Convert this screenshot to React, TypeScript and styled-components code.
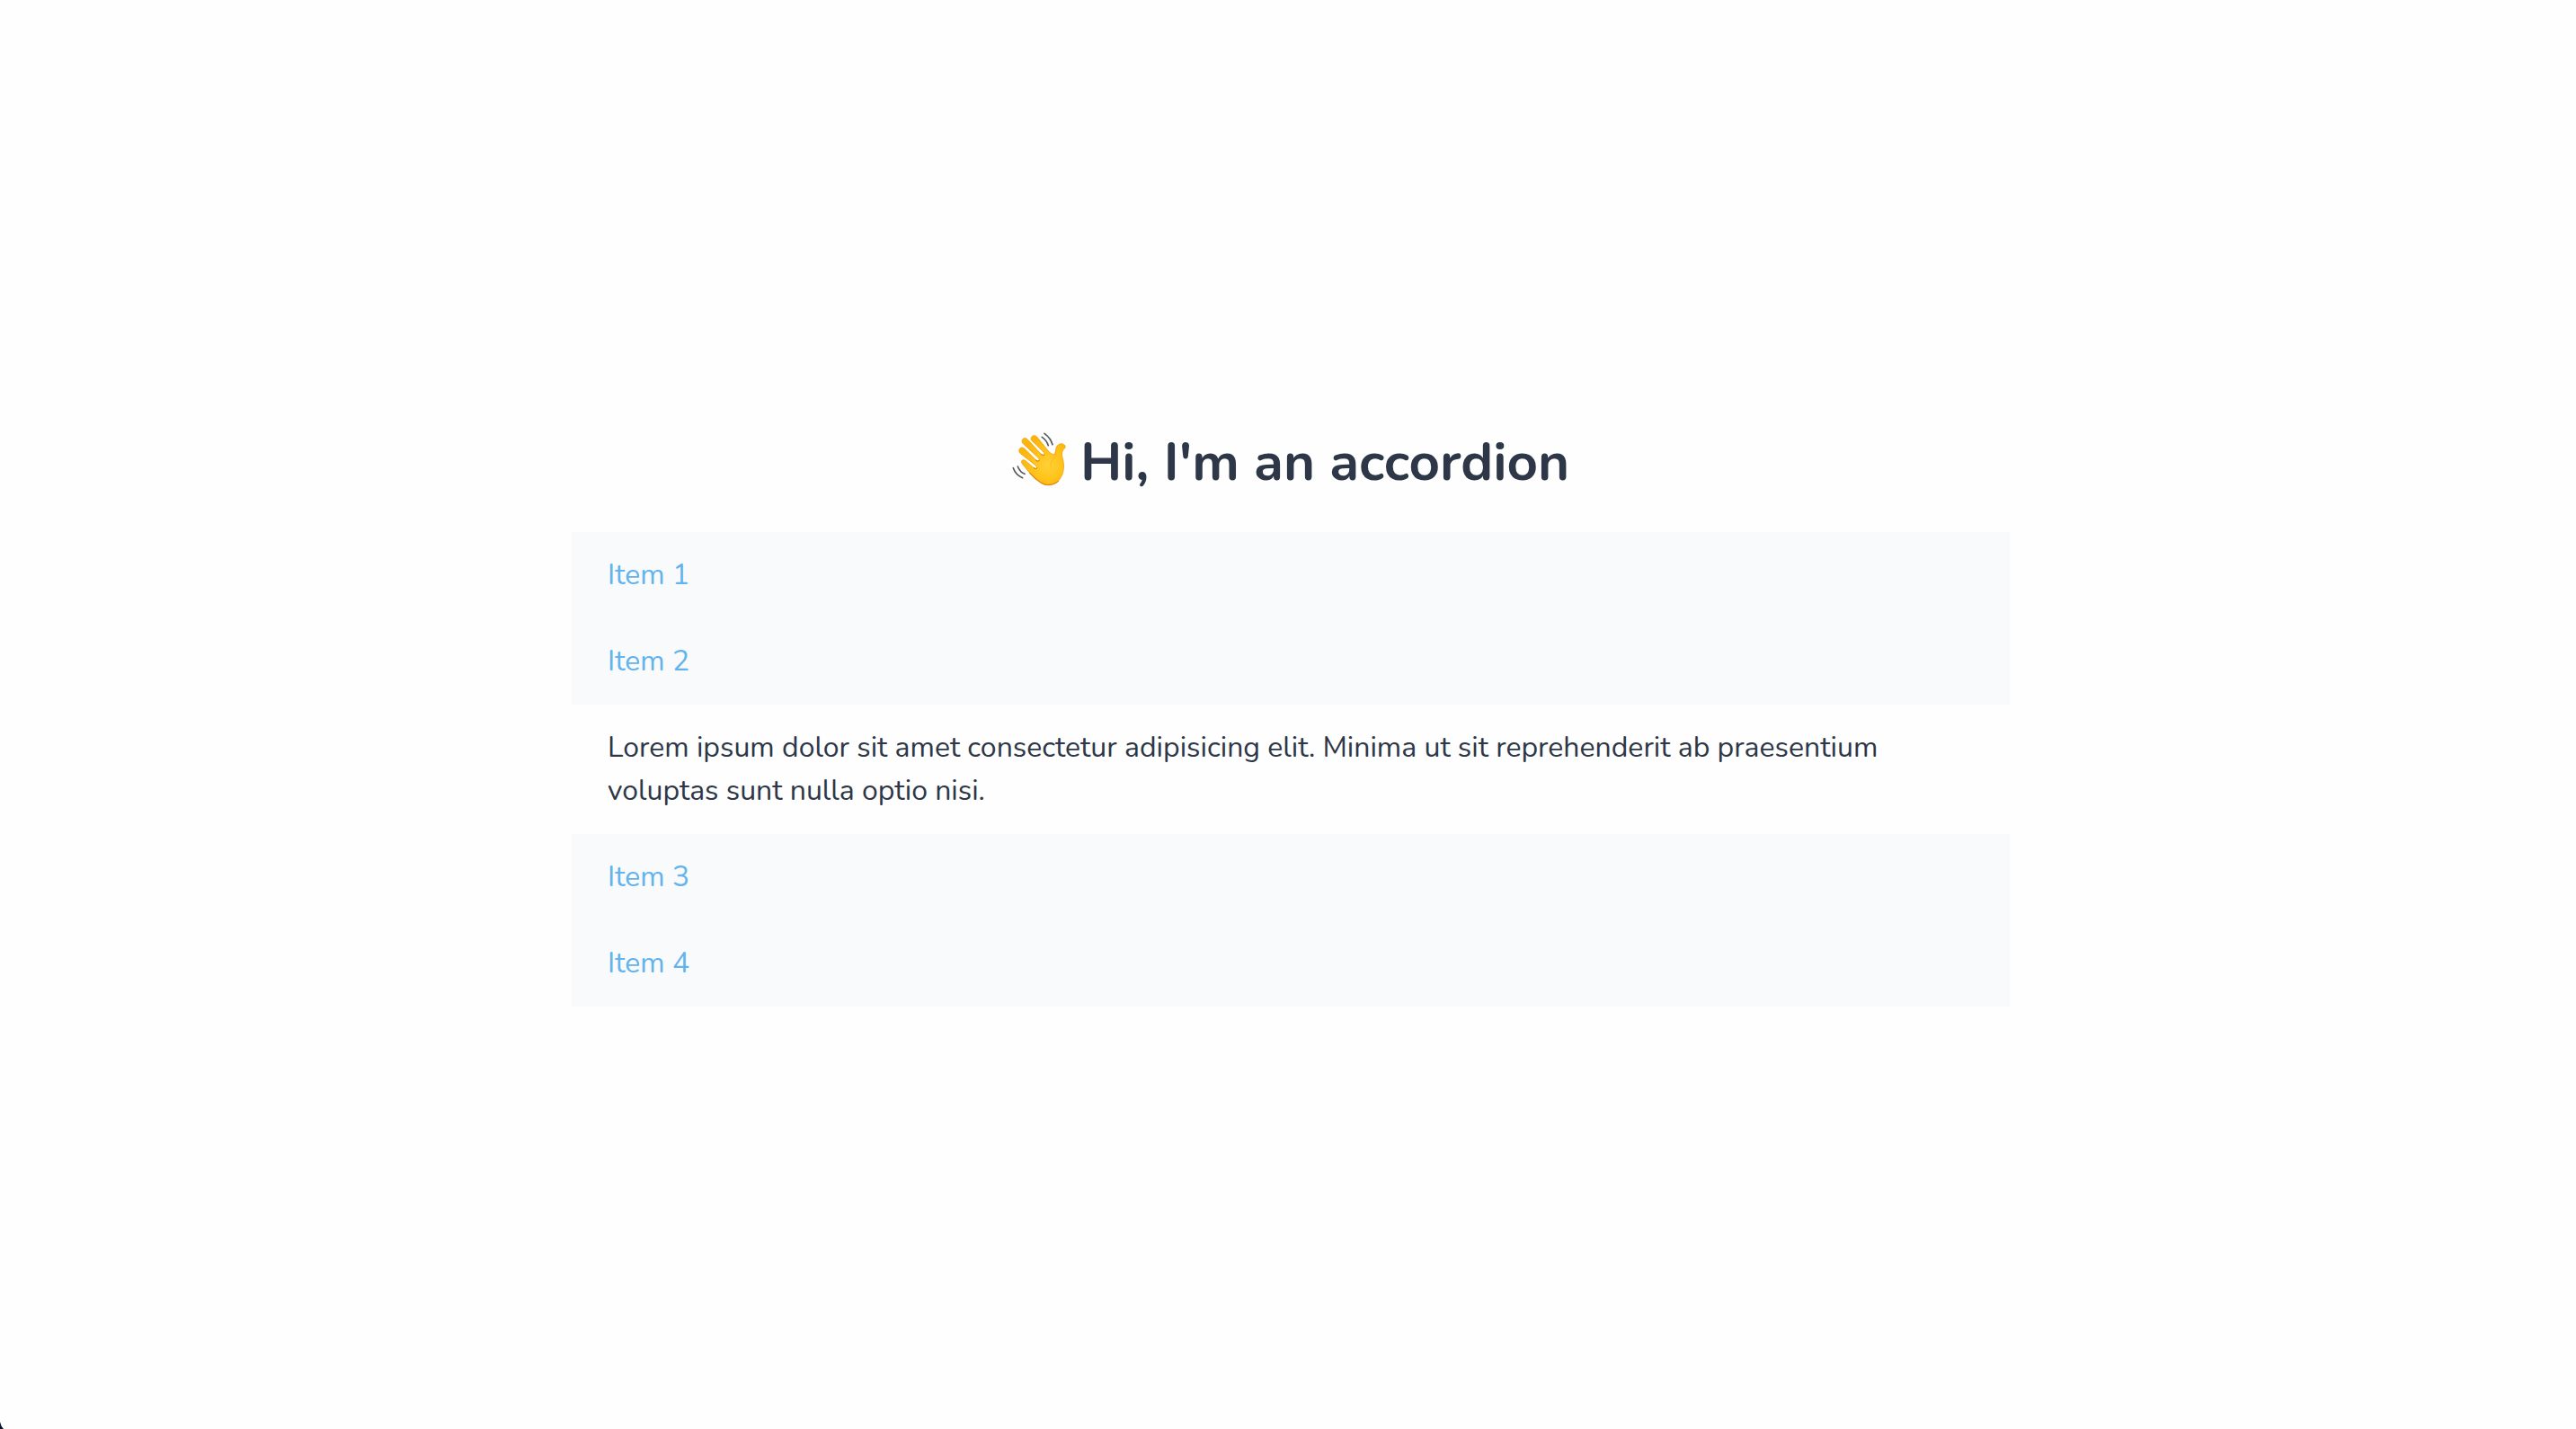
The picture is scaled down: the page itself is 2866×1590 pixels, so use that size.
import React, { useState } from "react";
import styled, { createGlobalStyle } from "styled-components";

const GlobalStyle = createGlobalStyle`
  *, *::before, *::after { box-sizing: border-box; }
  body {
    margin: 0;
    background: #fefefe;
    color: #2d3748;
    font-family: Nunito, Lato, sans-serif;
    font-size: 32px;
    line-height: 48px;
  }
`;

const Page = styled.main`
  display: flex;
  flex-direction: column;
  align-items: center;
  justify-content: center;
  min-height: 100vh;
  padding-left: 6px;
`;

const Title = styled.h1`
  display: flex;
  align-items: center;
  gap: 12px;
  margin: 0 0 34px;
  font-size: 60px;
  font-weight: 700;
  line-height: 88px;
`;

const Wave = styled.svg`
  width: 64px;
  height: 64px;
  flex: none;
  overflow: visible;
`;

const Accordion = styled.div`
  width: 100%;
  max-width: 1600px;
`;

const Header = styled.h2`
  margin: 0;
  font: inherit;
`;

const Trigger = styled.button`
  display: block;
  width: 100%;
  padding: 24px 40px;
  border: 0;
  background: #f9fafc;
  color: #63b3ed;
  font: inherit;
  text-align: left;
  cursor: pointer;
`;

const Panel = styled.div`
  padding: 24px 40px;
`;

const Corner = styled.svg`
  position: fixed;
  left: 0;
  bottom: 0;
  width: 4px;
  height: 8px;
`;

const LOREM =
  "Lorem ipsum dolor sit amet consectetur adipisicing elit. Minima ut sit reprehenderit ab praesentium voluptas sunt nulla optio nisi.";

const ITEMS = ["Item 1", "Item 2", "Item 3", "Item 4"];

const HAND =
  "M82 168 C75 158 84 151 93 158 L121 182 Q128 187 131 182 Q132 179 127 174 L75 133 C66 122 75 109 88 116 L128 156 Q134 162 138 157 Q140 154 136 149 L83 99 C77 87 88 77 99 86 L145 136 Q151 142 155 138 Q157 135 154 130 L112 89 C108 76 121 69 131 78 L170 127 Q178 136 187 137 Q193 135 194 122 C195 107 206 99 217 102 Q229 106 225 115 C214 124 212 135 218 154 C224 181 219 208 202 226 C185 242 160 243 144 231 Q124 218 107 199 Z";

function WavingHand() {
  return (
    <Wave viewBox="48 66 192 192" role="img" aria-label="Waving hand">
      <defs>
        <radialGradient id="skin" gradientUnits="userSpaceOnUse" cx="168" cy="172" r="92">
          <stop offset="0" stopColor="#ffd136" />
          <stop offset="0.5" stopColor="#ffc41c" />
          <stop offset="1" stopColor="#fdb50d" />
        </radialGradient>
      </defs>
      <path d={HAND} fill="url(#skin)" stroke="#f2a00f" strokeWidth="2.5" strokeLinejoin="round" />
      <path
        d="M121 182 Q128 187 131 182 M128 156 Q134 162 138 157 M145 136 Q151 142 155 138 M107 199 Q124 218 144 231 C160 242 185 241 202 226"
        fill="none"
        stroke="#e5820c"
        strokeWidth="3.5"
        strokeLinecap="round"
      />
      <path
        d="M194 123 Q192 151 181 159 Q174 167 178 181"
        fill="none"
        stroke="#f3a813"
        strokeWidth="3"
        strokeLinecap="round"
        opacity="0.5"
      />
      <path
        d="M156 67 Q177 82 183 104 M148 79 Q163 89 169 107 M52 182 Q60 205 83 215 M67 177 Q74 196 90 202"
        fill="none"
        stroke="#55575b"
        strokeWidth="5"
        strokeLinecap="round"
      />
    </Wave>
  );
}

export default function App() {
  const [open, setOpen] = useState(1);
  return (
    <>
      <GlobalStyle />
      <Page>
        <Title>
          <WavingHand />
          Hi, I'm an accordion
        </Title>
        <Accordion>
          {ITEMS.map((label, i) => (
            <section key={label}>
              <Header>
                <Trigger
                  type="button"
                  id={`trigger-${i}`}
                  aria-expanded={open === i}
                  aria-controls={`panel-${i}`}
                  onClick={() => setOpen(open === i ? -1 : i)}
                >
                  {label}
                </Trigger>
              </Header>
              <Panel id={`panel-${i}`} role="region" aria-labelledby={`trigger-${i}`} hidden={open !== i}>
                {LOREM}
              </Panel>
            </section>
          ))}
        </Accordion>
      </Page>
      <Corner viewBox="0 0 4 8" aria-hidden="true">
        <path d="M0 0 Q1 5 4 8 H0 Z" fill="#0b1526" />
      </Corner>
    </>
  );
}
